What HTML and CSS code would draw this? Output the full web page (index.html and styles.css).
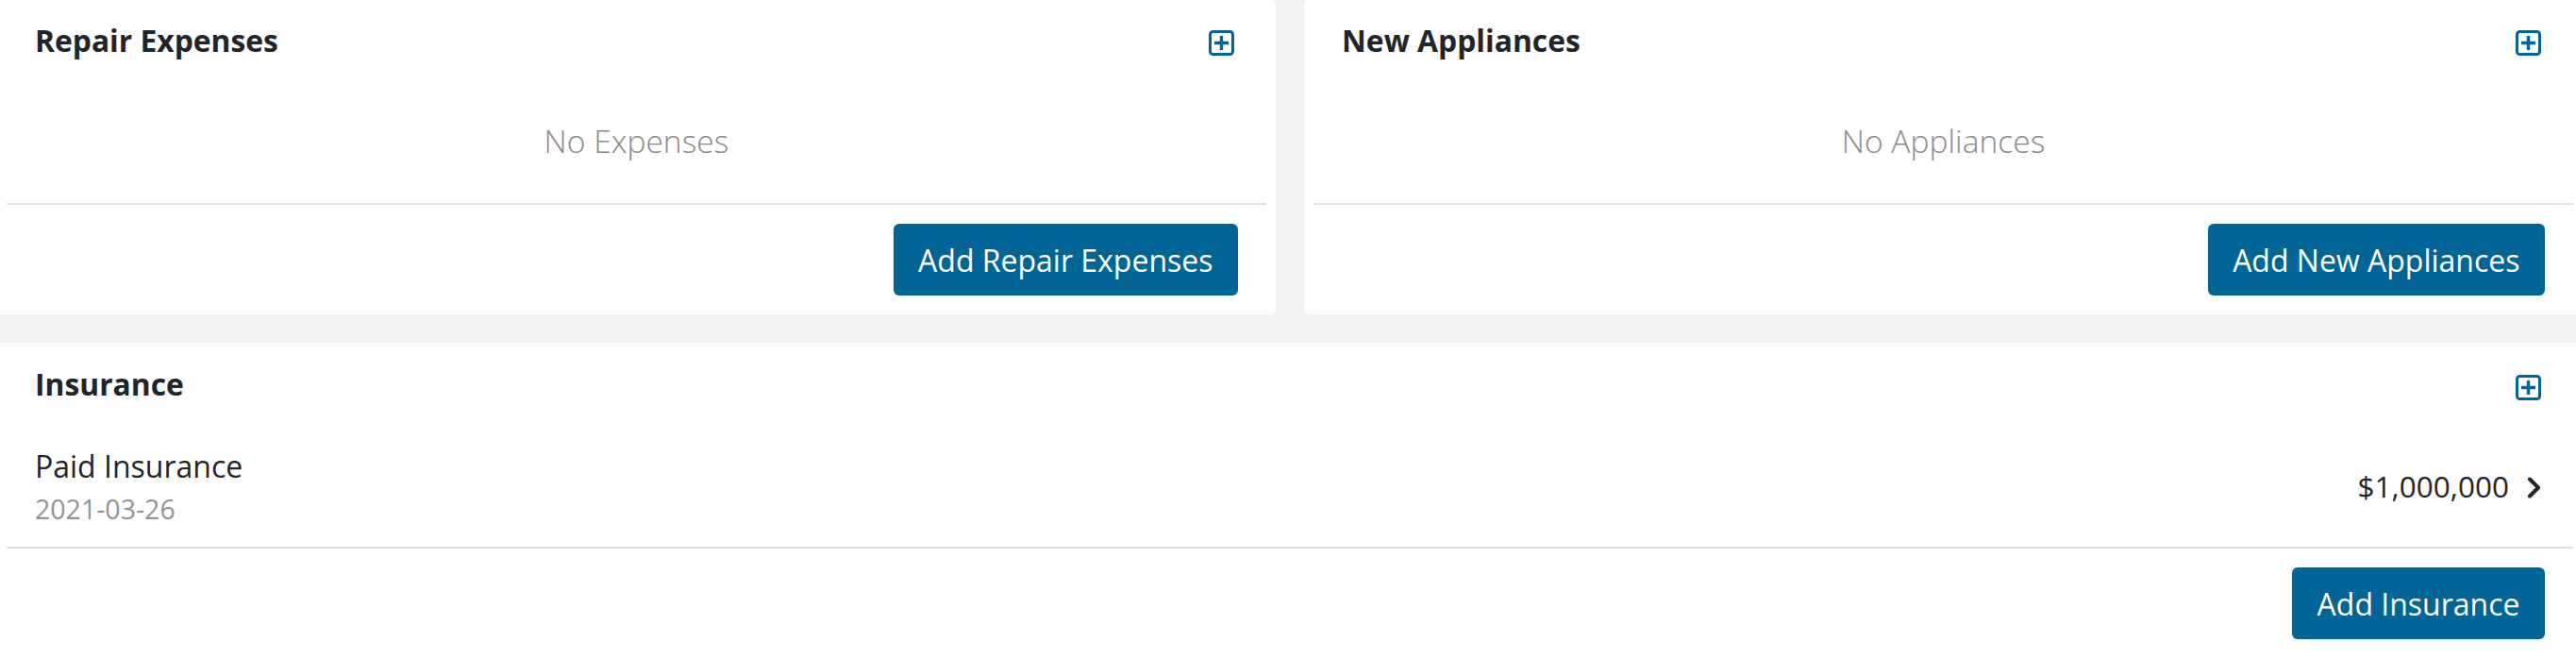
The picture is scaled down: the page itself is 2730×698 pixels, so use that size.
FILE: index.html
```html
<!DOCTYPE html>
<html lang="en">
<head>
<meta charset="utf-8">
<title>Property costs</title>
<link rel="stylesheet" href="styles.css">
</head>
<body>
<div class="page">
  <div class="top-row">
    <section class="card">
      <header class="card-header">
        <h2 class="card-title">Repair Expenses</h2>
        <button class="icon-btn" aria-label="Add">
          <svg width="27" height="27" viewBox="0 0 27 27"><rect x="1.5" y="1.5" width="24" height="24" rx="3" fill="none" stroke="currentColor" stroke-width="3"/><path d="M13.5 6v15M6 13.5h15" stroke="currentColor" stroke-width="3.4" fill="none"/></svg>
        </button>
      </header>
      <div class="empty">No Expenses</div>
      <hr class="divider">
      <footer class="card-footer"><button class="btn">Add Repair Expenses</button></footer>
    </section>
    <section class="card">
      <header class="card-header">
        <h2 class="card-title">New Appliances</h2>
        <button class="icon-btn" aria-label="Add">
          <svg width="27" height="27" viewBox="0 0 27 27"><rect x="1.5" y="1.5" width="24" height="24" rx="3" fill="none" stroke="currentColor" stroke-width="3"/><path d="M13.5 6v15M6 13.5h15" stroke="currentColor" stroke-width="3.4" fill="none"/></svg>
        </button>
      </header>
      <div class="empty">No Appliances</div>
      <hr class="divider">
      <footer class="card-footer"><button class="btn">Add New Appliances</button></footer>
    </section>
  </div>
  <section class="card card-wide">
    <header class="card-header">
      <h2 class="card-title">Insurance</h2>
      <button class="icon-btn icon-btn-low" aria-label="Add">
        <svg width="27" height="27" viewBox="0 0 27 27"><rect x="1.5" y="1.5" width="24" height="24" rx="3" fill="none" stroke="currentColor" stroke-width="3"/><path d="M13.5 6v15M6 13.5h15" stroke="currentColor" stroke-width="3.4" fill="none"/></svg>
      </button>
    </header>
    <div class="item">
      <div class="item-main">
        <div class="item-name">Paid Insurance</div>
        <div class="item-date">2021-03-26</div>
      </div>
      <div class="item-side">
        <span class="item-amount">$1,000,000</span>
        <svg class="chevron" width="16" height="23" viewBox="0 0 16 23"><path d="M3 2.5l9 9-9 9" fill="none" stroke="currentColor" stroke-width="4" stroke-linecap="round" stroke-linejoin="round"/></svg>
      </div>
    </div>
    <hr class="divider divider-item">
    <footer class="card-footer card-footer-last"><button class="btn">Add Insurance</button></footer>
  </section>
</div>
</body>
</html>
```

FILE: styles.css
```css
* { box-sizing: border-box; }

html, body {
  margin: 0;
  padding: 0;
  background: #f2f2f2;
  overflow: hidden;
}

body {
  font-family: "Open Sans", "Noto Sans", sans-serif;
  color: #212529;
}

.page {
  width: 2740px;
  margin: -1px 0 0 -3px;
  display: flex;
  flex-direction: column;
  gap: 30px;
}

.top-row {
  display: grid;
  grid-template-columns: 1fr 1fr;
  gap: 30px;
}

.card {
  background: #fff;
  border-radius: 6px;
  display: flex;
  flex-direction: column;
}

.card-header {
  display: flex;
  justify-content: space-between;
  align-items: flex-start;
  padding: 25px 44px 0 40px;
}

.card-title {
  margin: 0;
  font-size: 31.8px;
  line-height: 37px;
  font-weight: 700;
  color: #212529;
}

.icon-btn {
  margin: 8px 0 0;
  padding: 0;
  border: 0;
  background: none;
  color: #016597;
  width: 27px;
  height: 27px;
  display: flex;
}

.icon-btn-low { margin-top: 9px; }

.empty {
  text-align: center;
  font-size: 33.6px;
  font-weight: 300;
  line-height: 50px;
  color: #8a8a8a;
  padding: 63px 0 41px;
}

.divider {
  margin: 0 10px;
  border: 0;
  height: 2px;
  background: #dee2e6;
}

.card-footer {
  display: flex;
  justify-content: flex-end;
  padding: 20px 40px 20px;
}

.card-footer-last { padding-bottom: 30px; }

.btn {
  font-family: "Open Sans", "Noto Sans", sans-serif;
  font-size: 32px;
  line-height: 47px;
  padding: 14.5px 26.5px;
  border: 0;
  border-radius: 6px;
  background: #016597;
  color: #fff;
}

.item {
  display: flex;
  justify-content: space-between;
  align-items: center;
  padding: 45px 43px 19px 40px;
}

.item-name {
  font-size: 32px;
  line-height: 48px;
  color: #212529;
}

.item-date {
  font-size: 28.5px;
  line-height: 42px;
  color: #939393;
}

.item-side {
  display: flex;
  align-items: center;
  gap: 19px;
}

.item-amount {
  font-size: 31.5px;
  line-height: 46px;
  color: #212529;
}

.chevron {
  color: #212529;
  margin-top: 2px;
}
```
